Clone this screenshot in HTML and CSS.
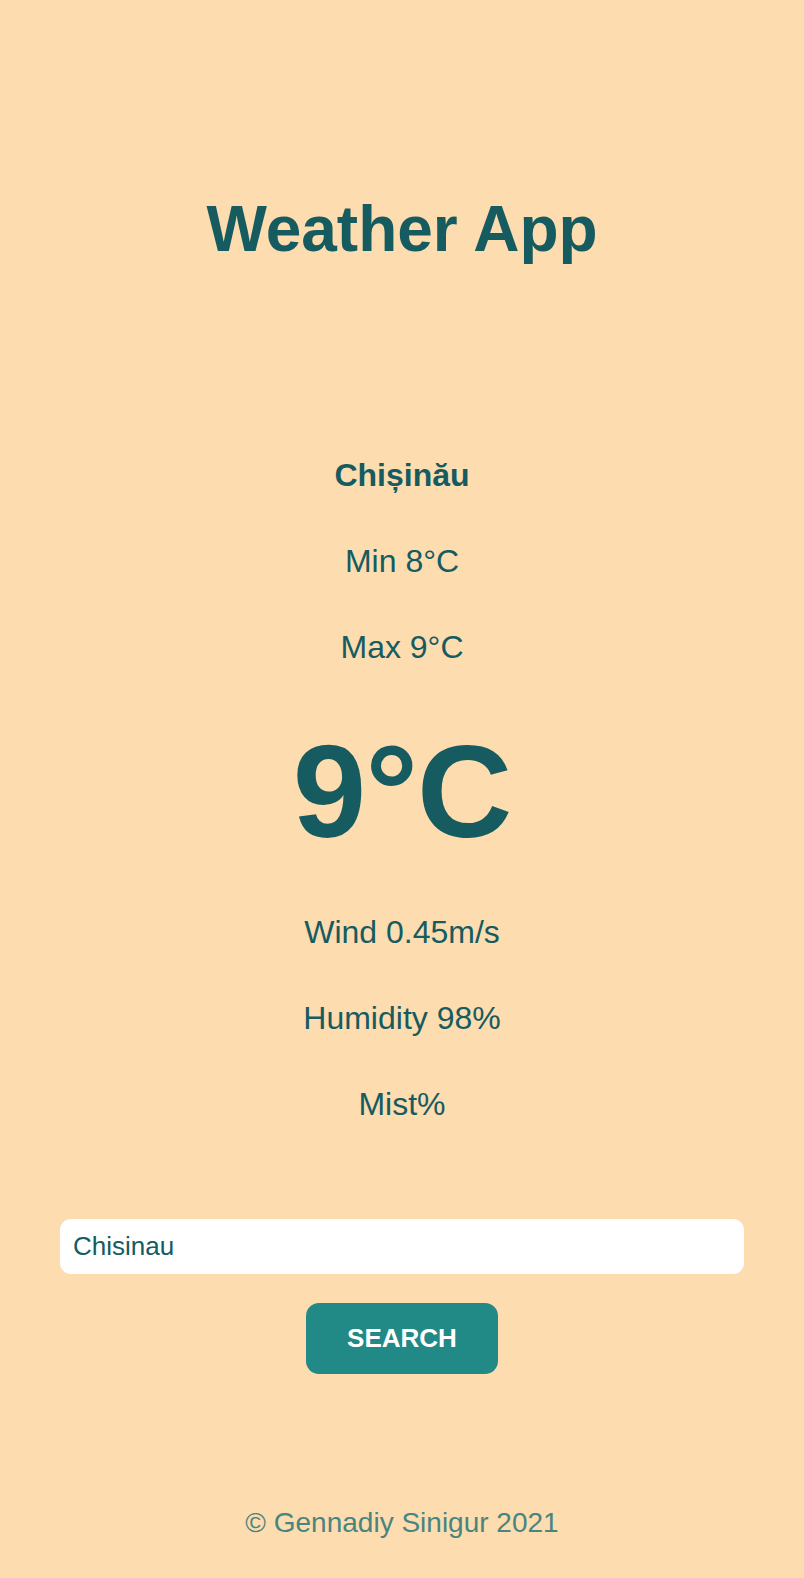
FILE: index.html
```html
<!DOCTYPE html>
<html lang="en">
<head>
<meta charset="utf-8">
<title>Weather App</title>
<link rel="stylesheet" href="styles.css">
</head>
<body>
<main class="app">
  <h1 class="title">Weather App</h1>
  <section class="weather">
    <p class="city">Chișinău</p>
    <p class="line">Min 8°C</p>
    <p class="line">Max 9°C</p>
    <p class="temp">9°C</p>
    <p class="line line-wind">Wind 0.45m/s</p>
    <p class="line">Humidity 98%</p>
    <p class="line">Mist%</p>
  </section>
  <form class="search">
    <input class="search-input" type="text" value="Chisinau">
    <button class="search-btn" type="button">SEARCH</button>
  </form>
  <footer class="footer">© Gennadiy Sinigur 2021</footer>
</main>
</body>
</html>
```

FILE: styles.css
```css
html, body {
  margin: 0;
  padding: 0;
  background: #fddcb0;
}

body {
  font-family: "Liberation Sans", Arial, Helvetica, sans-serif;
  color: #155b5f;
}

.app {
  display: flex;
  flex-direction: column;
  align-items: center;
  padding: 191px 60px 0;
  text-align: center;
}

.title {
  margin: 0;
  font-size: 64px;
  line-height: 1.2;
  font-weight: 700;
}

.weather {
  display: flex;
  flex-direction: column;
  align-items: center;
  gap: 47.5px;
  margin-top: 188px;
}

.weather p {
  margin: 0;
}

.city {
  font-size: 32px;
  line-height: 1.2;
  font-weight: 700;
}

.line {
  font-size: 32px;
  line-height: 1.2;
}

.temp {
  font-size: 132px;
  line-height: 1.2;
  font-weight: 700;
  letter-spacing: -1px;
}

.weather .line-wind {
  margin-top: -6px;
}

.search {
  display: flex;
  flex-direction: column;
  align-items: center;
  gap: 29px;
  width: 100%;
  margin-top: 95px;
}

.search-input {
  box-sizing: border-box;
  width: 100%;
  height: 55px;
  margin: 0;
  padding: 0 13px;
  border: none;
  border-radius: 11px;
  background: #ffffff;
  font-family: "Liberation Sans", Arial, sans-serif;
  font-size: 26px;
  color: #155b5f;
  outline: none;
}

.search-btn {
  width: 192px;
  height: 71px;
  margin: 0;
  padding: 0;
  border: none;
  border-radius: 13px;
  background: #218986;
  color: #ffffff;
  font-family: "Liberation Sans", Arial, sans-serif;
  font-size: 26px;
  font-weight: 700;
}

.footer {
  margin-top: 132px;
  font-size: 28px;
  line-height: 1.2;
  color: #4a847e;
}
```
